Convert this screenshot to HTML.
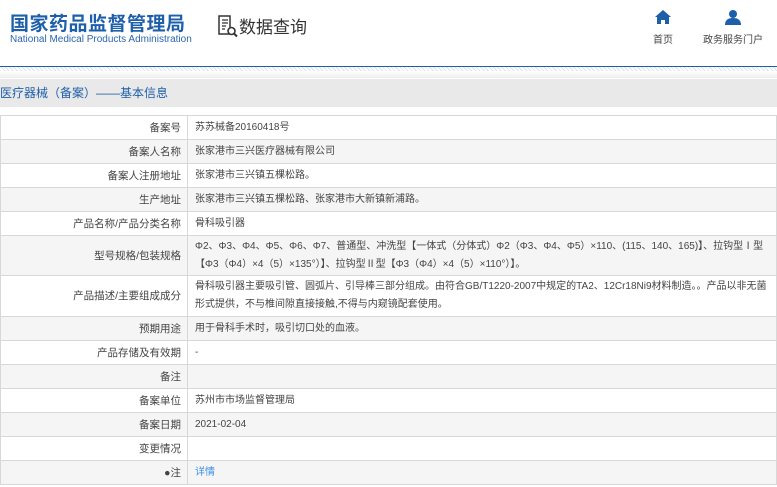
<!DOCTYPE html>
<html><head><meta charset="utf-8"><style>
*{margin:0;padding:0;box-sizing:border-box}
body{width:777px;height:487px;overflow:hidden;background:#fff;font-family:"Liberation Sans","Noto Sans CJK SC",sans-serif;color:#333;position:relative}
.logo1{position:absolute;left:10px;top:9px;font-size:19px;font-weight:bold;color:#1d5fa8;letter-spacing:0.5px}
.logo2{position:absolute;left:10px;top:34px;font-size:10px;color:#2a66ad}
.dq{position:absolute;left:217px;top:13px;font-size:17px;color:#333}
.nav{position:absolute;top:10px;font-size:10px;color:#444;text-align:center}
.line{position:absolute;left:0;top:66px;width:777px;height:1px;background:#1d5fa8}
.hatch{position:absolute;left:0;top:67px;width:777px;height:4px;background:repeating-linear-gradient(45deg,#dde3ea 0 1px,#fff 1px 3px)}
.grad{position:absolute;left:0;top:71px;width:777px;height:7px;background:linear-gradient(#fff,#eee)}
.band{position:absolute;left:0;top:79px;width:777px;height:28px;background:#e9e9e9;font-size:12px;color:#1d5fa8;line-height:28px}
table{position:absolute;left:0;top:115px;width:777px;border-collapse:collapse;font-size:10.5px;color:#444}
td{border:1px solid #d8d8d8;height:24px;padding:0 3px 0 7px;line-height:18px;font-size:10px}
td.l{width:187px;text-align:right;padding-right:6px;font-size:10.5px}
tr:nth-child(even) td{background:#f5f5f5}
a{color:#3a8ee6;text-decoration:none}
</style></head><body>
<div class="logo1">国家药品监督管理局</div>
<div class="logo2">National Medical Products Administration</div>
<div class="dq"><svg width="22" height="24" viewBox="0 0 22 24" style="vertical-align:-5px"><path d="M2 2h11v18H2z" fill="none" stroke="#333" stroke-width="1.5"/><path d="M5 6h6M5 9h6M5 12h4M5 15h3" stroke="#333" stroke-width="1.3"/><circle cx="14.5" cy="17" r="3.5" fill="#fff" stroke="#333" stroke-width="1.6"/><path d="M17 19.5l3 3" stroke="#333" stroke-width="2"/></svg>数据查询</div>
<div class="nav" style="left:648px;width:30px"><svg width="16" height="14" viewBox="0 0 16 14"><path d="M8 0L0 7h2v7h4v-4h4v4h4V7h2z" fill="#1d5fa8"/></svg><div style="margin-top:4px">首页</div></div>
<div class="nav" style="left:700px;width:66px"><svg width="16" height="15" viewBox="0 0 16 15"><circle cx="8" cy="4" r="4" fill="#1d5fa8"/><path d="M0 15c0-5 3-7 8-7s8 2 8 7z" fill="#1d5fa8"/></svg><div style="margin-top:3px">政务服务门户</div></div>
<div class="line"></div><div class="hatch"></div><div class="grad"></div>
<div class="band">医疗器械（备案）——基本信息</div>
<table>
<tr><td class="l">备案号</td><td>苏苏械备20160418号</td></tr>
<tr><td class="l">备案人名称</td><td>张家港市三兴医疗器械有限公司</td></tr>
<tr><td class="l">备案人注册地址</td><td>张家港市三兴镇五棵松路。</td></tr>
<tr><td class="l">生产地址</td><td>张家港市三兴镇五棵松路、张家港市大新镇新浦路。</td></tr>
<tr><td class="l">产品名称/产品分类名称</td><td>骨科吸引器</td></tr>
<tr><td class="l" style="height:40px">型号规格/包装规格</td><td>Φ2、Φ3、Φ4、Φ5、Φ6、Φ7、普通型、冲洗型【一体式（分体式）Φ2（Φ3、Φ4、Φ5）×110、(115、140、165)】、拉钩型Ⅰ型【Φ3（Φ4）×4（5）×135°）】、拉钩型Ⅱ型【Φ3（Φ4）×4（5）×110°）】。</td></tr>
<tr><td class="l" style="height:41px">产品描述/主要组成成分</td><td>骨科吸引器主要吸引管、圆弧片、引导棒三部分组成。由符合GB/T1220-2007中规定的TA2、12Cr18Ni9材料制造。。产品以非无菌形式提供，不与椎间隙直接接触,不得与内窥镜配套使用。</td></tr>
<tr><td class="l">预期用途</td><td>用于骨科手术时，吸引切口处的血液。</td></tr>
<tr><td class="l">产品存储及有效期</td><td>-</td></tr>
<tr><td class="l">备注</td><td></td></tr>
<tr><td class="l">备案单位</td><td>苏州市市场监督管理局</td></tr>
<tr><td class="l">备案日期</td><td>2021-02-04</td></tr>
<tr><td class="l">变更情况</td><td></td></tr>
<tr><td class="l">●注</td><td><a>详情</a></td></tr>
</table>
</body></html>
